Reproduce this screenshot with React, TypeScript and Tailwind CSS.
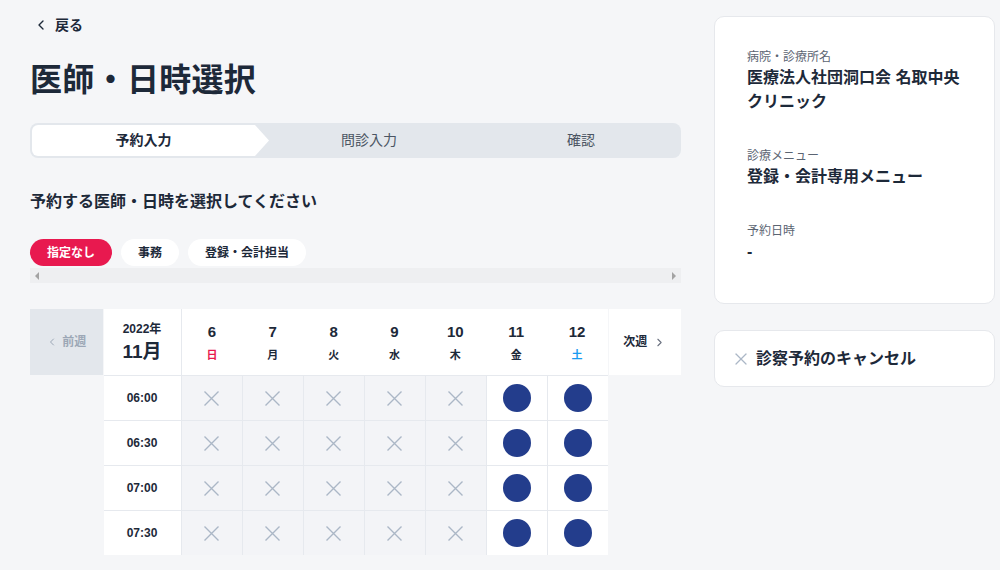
import { ChevronLeft, ChevronRight, X } from 'lucide-react';

const days = [
  { d: 6, w: '日', c: 'text-[#e8194f]' },
  { d: 7, w: '月', c: 'text-[#1d2939]' },
  { d: 8, w: '火', c: 'text-[#1d2939]' },
  { d: 9, w: '水', c: 'text-[#1d2939]' },
  { d: 10, w: '木', c: 'text-[#1d2939]' },
  { d: 11, w: '金', c: 'text-[#1d2939]' },
  { d: 12, w: '土', c: 'text-[#1a9bf0]' },
];

const times = ['06:00', '06:30', '07:00', '07:30'];

// 11日・12日だけ空きあり
const open = [false, false, false, false, false, true, true];

function Cross() {
  return (
    <svg width="17" height="17" viewBox="0 0 17 17" fill="none" stroke="#abb7c6" strokeWidth="1.4">
      <path d="M1.5 1.5l14 14M15.5 1.5l-14 14" />
    </svg>
  );
}

export default function App() {
  return (
    <div className="min-h-[570px] bg-[#f5f6f8] font-['Liberation_Sans','Noto_Sans_CJK_JP',sans-serif] text-[#1d2939]">
      <div className="flex pl-[30px] pr-[5px]">
        {/* Left column */}
        <div className="w-[651px] pt-[15px]">
          <div className="flex h-[20px] items-center gap-[6px] pl-[3px]">
            <ChevronLeft size={16} strokeWidth={2} />
            <span className="text-[14px] font-bold">戻る</span>
          </div>

          <h1 className="mt-[25px] text-[32px] leading-[40px] font-bold tracking-[0.3px]">医師・日時選択</h1>

          {/* Stepper */}
          <div className="mt-[23px] flex h-[35px] rounded-lg bg-[#e3e7ec] p-[2px]">
            <div className="relative z-10 -mr-[14px] flex w-[237px] items-center justify-center rounded-l-md bg-white pr-[14px] text-[14px] font-bold [clip-path:polygon(0_0,calc(100%-14px)_0,100%_50%,calc(100%-14px)_100%,0_100%)]">
              予約入力
            </div>
            <div className="flex w-[228px] items-center justify-center text-[14px] text-[#4b5563]">問診入力</div>
            <div className="flex flex-1 items-center justify-center text-[14px] text-[#4b5563]">確認</div>
          </div>

          <p className="mt-[32px] text-[16px] leading-[24px] font-bold">予約する医師・日時を選択してください</p>

          {/* Doctor filter chips */}
          <div className="mt-[25px] flex gap-[9px]">
            <button className="h-[27px] rounded-full bg-[#e8194f] px-[17px] text-[12px] font-bold text-white">指定なし</button>
            <button className="h-[27px] rounded-full bg-white px-[17px] text-[12px] font-bold">事務</button>
            <button className="h-[27px] rounded-full bg-white px-[17px] text-[12px] font-bold">登録・会計担当</button>
          </div>
          <div className="mt-[2px] flex h-[15px] items-center justify-between bg-[#eeeff1] px-[5px]">
            <span className="h-0 w-0 border-y-[4px] border-r-[4px] border-y-transparent border-r-[#a3a3a3]" />
            <span className="h-0 w-0 border-y-[4px] border-l-[4px] border-y-transparent border-l-[#a3a3a3]" />
          </div>

          {/* Calendar */}
          <div className="mt-[26px] flex items-start gap-px">
            <div className="flex h-[66px] w-[73px] items-center justify-center gap-[4px] bg-[#e3e7ec] text-[12px] font-bold text-[#9ca7b6]">
              <ChevronLeft size={12} strokeWidth={2} />
              前週
            </div>

            <div className="grid grid-cols-[77px_repeat(7,60px)] gap-px bg-[#e6e9ee]">
              <div className="flex h-[66px] flex-col items-center justify-center bg-white">
                <span className="text-[12px] leading-[16px] font-bold">2022年</span>
                <span className="mt-[3px] text-[19px] leading-[24px] font-bold">11月</span>
              </div>
              <div className="col-span-7 grid grid-cols-7 bg-white">
                {days.map((day) => (
                  <div key={day.d} className="flex flex-col items-center justify-center">
                    <span className="text-[15px] leading-[20px] font-bold">{day.d}</span>
                    <span className={`mt-[5px] text-[11px] leading-[16px] font-bold ${day.c}`}>{day.w}</span>
                  </div>
                ))}
              </div>

              {times.map((t) => (
                <>
                  <div key={t} className="flex h-[44px] items-center justify-center bg-white text-[12px] font-bold">
                    {t}
                  </div>
                  {open.map((ok, i) =>
                    ok ? (
                      <div key={t + i} className="flex h-[44px] items-center justify-center bg-white">
                        <span className="h-[28px] w-[28px] rounded-full bg-[#233d8c]" />
                      </div>
                    ) : (
                      <div key={t + i} className="flex h-[44px] items-center justify-center bg-[#f3f4f7]">
                        <Cross />
                      </div>
                    )
                  )}
                </>
              ))}
            </div>

            <div className="flex h-[66px] w-[73px] items-center justify-center gap-[6px] bg-white text-[12px] font-bold">
              次週
              <ChevronRight size={13} strokeWidth={2} className="text-[#6b7280]" />
            </div>
          </div>
        </div>

        {/* Right column */}
        <div className="ml-[33px] w-[281px] pt-[16px]">
          <div className="h-[288px] rounded-[10px] border border-[#e6e8ec] bg-white pt-[31px] pl-[32px] pr-[30px]">
            <p className="text-[12px] leading-[18px] text-[#5b6472]">病院・診療所名</p>
            <p className="text-[16px] leading-[24px] font-bold">医療法人社団洞口会 名取中央クリニック</p>
            <p className="mt-[33px] text-[12px] leading-[18px] text-[#5b6472]">診療メニュー</p>
            <p className="text-[16px] leading-[24px] font-bold">登録・会計専用メニュー</p>
            <p className="mt-[33px] text-[12px] leading-[18px] text-[#5b6472]">予約日時</p>
            <p className="text-[16px] leading-[24px] font-bold">-</p>
          </div>

          <div className="mt-[26px] flex h-[57px] items-center gap-[5px] rounded-[10px] border border-[#e6e8ec] bg-white pl-[16px]">
            <X size={20} strokeWidth={1.5} className="text-[#abb7c6]" />
            <span className="text-[16px] font-bold">診察予約のキャンセル</span>
          </div>
        </div>
      </div>
    </div>
  );
}
